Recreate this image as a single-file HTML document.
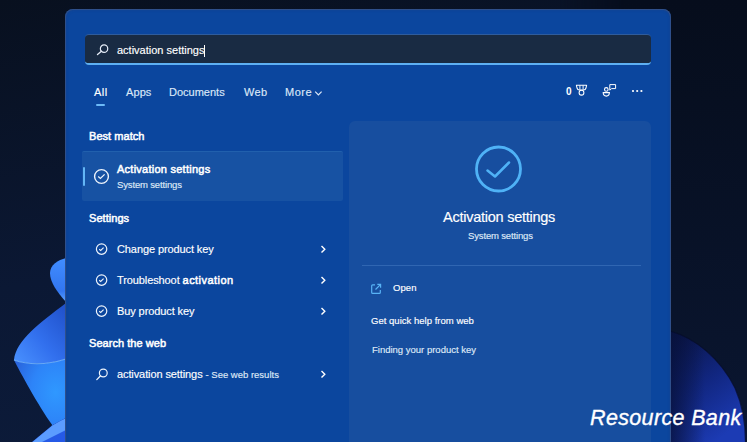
<!DOCTYPE html>
<html><head><meta charset="utf-8">
<style>
*{margin:0;padding:0;box-sizing:border-box}
html,body{width:747px;height:442px;overflow:hidden;background:#07101f;font-family:"Liberation Sans",sans-serif;color:#fff}
.abs{position:absolute}
#bg{position:absolute;left:0;top:0;width:747px;height:442px}
#panel{position:absolute;left:65px;top:9px;width:606px;height:440px;background:#0b469e;border-radius:8px;box-shadow:inset 0 0 0 1px rgba(60,85,135,.7), inset 0 0 3px 1px rgba(30,60,120,.45)}
#search{position:absolute;left:85px;top:34px;width:566px;height:31px;background:#192b43;border-radius:4px;border-top:1px solid #2f5c9c;border-bottom:2px solid #5eb0f2}
.t{position:absolute;white-space:nowrap;line-height:1}
.tab{font-size:11px;color:#dce8f8;-webkit-text-stroke:0.15px currentColor}
.hdr{font-size:11px;font-weight:normal;color:#fff;letter-spacing:0.05px;-webkit-text-stroke:0.5px #fff}
.row{font-size:11px;color:#fff;letter-spacing:-0.1px;-webkit-text-stroke:0.15px currentColor}
.row b{font-weight:normal;-webkit-text-stroke:0.5px #fff;letter-spacing:0.45px}
.sub{font-size:9.5px;color:#dfe9f7;letter-spacing:-0.15px;-webkit-text-stroke:0.15px currentColor}
#rp{position:absolute;left:349px;top:121px;width:302px;height:330px;background:#174e9f;border-radius:6px}
</style></head><body>
<svg id="bg" viewBox="0 0 747 442">
  <defs>
    <linearGradient id="bgg" x1="0" y1="0" x2="0.3" y2="1">
      <stop offset="0" stop-color="#08101f"/><stop offset="0.6" stop-color="#0b1834"/><stop offset="1" stop-color="#0c1b3a"/>
    </linearGradient>
    <linearGradient id="leaf" x1="0" y1="0" x2="0" y2="1">
      <stop offset="0" stop-color="#418dff"/><stop offset="0.75" stop-color="#3276f0"/><stop offset="1" stop-color="#5aa2ff"/>
    </linearGradient>
    <linearGradient id="cup" x1="1" y1="0" x2="0" y2="1">
      <stop offset="0" stop-color="#1f4fc8"/><stop offset="0.55" stop-color="#3270ee"/><stop offset="1" stop-color="#4a92ff"/>
    </linearGradient>
    <radialGradient id="bowl" cx="0.8" cy="0.5" r="0.85">
      <stop offset="0" stop-color="#2f98ff"/><stop offset="0.55" stop-color="#2d84f8"/><stop offset="1" stop-color="#2a66de"/>
    </radialGradient>
    <linearGradient id="pet" x1="0" y1="0" x2="1" y2="1">
      <stop offset="0" stop-color="#2a5fe0"/><stop offset="1" stop-color="#2458e8"/>
    </linearGradient>
    <linearGradient id="rb" gradientUnits="userSpaceOnUse" x1="672" y1="338" x2="738" y2="425">
      <stop offset="0" stop-color="#0a1547"/><stop offset="0.5" stop-color="#112680"/><stop offset="1" stop-color="#1c3bb4"/>
    </linearGradient>
    <linearGradient id="rbl" gradientUnits="userSpaceOnUse" x1="671" y1="0" x2="705" y2="0">
      <stop offset="0" stop-color="#07113a" stop-opacity="0.75"/><stop offset="1" stop-color="#07113a" stop-opacity="0"/>
    </linearGradient>
    <linearGradient id="rbg" x1="0" y1="0" x2="0" y2="1">
      <stop offset="0" stop-color="#060d1c"/><stop offset="1" stop-color="#0a1631"/>
    </linearGradient>
    <linearGradient id="rmask" x1="0" y1="0" x2="1" y2="0">
      <stop offset="0" stop-color="#fff" stop-opacity="0"/><stop offset="0.35" stop-color="#fff" stop-opacity="1"/>
    </linearGradient>
    <mask id="rm"><rect x="560" width="187" height="442" fill="url(#rmask)"/></mask>
  </defs>
  <rect width="747" height="442" fill="url(#bgg)"/><rect x="560" width="187" height="442" fill="url(#rbg)" mask="url(#rm)"/>
  <path d="M66 258 C58 260 50 265 50 273 C50 282 57 292 66 302 Z" fill="url(#leaf)"/>
  <path d="M66 303 C40 323 16 340 14 360 Q37 368 66 359 Z" fill="url(#cup)"/>
  <path d="M14 360 Q37 368 66 359 L66 418 L52.4 425.3 C38 405 20 372 14 360 Z" fill="url(#bowl)"/>
  <path d="M14 360 Q37 368 66 359" fill="none" stroke="#72b4ff" stroke-width="1.2" opacity="0.85"/>
  <path d="M32 442 L52.4 425.3 Q60 420.5 66 418 L66 442 Z" fill="url(#pet)"/>
  <path d="M32.5 442 L52.4 425.6 Q60 420.8 66 418.3 L66 430 L42 442 Z" fill="#5b9cff"/>
  <path d="M670 331 C695 338 720 358 735 388 C742 404 745.5 420 745.5 442 L670 442 Z" fill="url(#rb)"/><path d="M670 331 C695 338 720 358 735 388 C742 404 745.5 420 745.5 442 L670 442 Z" fill="url(#rbl)"/><path d="M670 331 C695 338 720 358 735 388 C742 404 745.5 420 745.5 442" fill="none" stroke="#050b26" stroke-width="1.2" opacity="0.7"/>
  
</svg>
<div id="panel"></div>
<div id="search"></div>
<div id="rp"></div>

<!-- search box -->
<svg class="abs" style="left:94px;top:40px" width="16" height="18" viewBox="0 0 16 18"><circle cx="10.05" cy="8.65" r="3.7" fill="none" stroke="#e6edf8" stroke-width="1.2"/><path d="M7.4 11.3 L3.5 14.6" stroke="#e6edf8" stroke-width="1.3" stroke-linecap="round"/></svg>
<div class="t" style="left:117px;top:45px;font-size:11px;color:#fff;-webkit-text-stroke:0.15px #fff">activation settings</div>
<div class="abs" style="left:204px;top:45px;width:1px;height:12px;background:#fff"></div>

<!-- tabs -->
<div class="t tab" style="left:94px;top:87px;color:#fff;letter-spacing:0.5px">All</div>
<div class="abs" style="left:96px;top:104px;width:9px;height:2px;border-radius:1px;background:#6cbaf7"></div>
<div class="t tab" style="left:126px;top:87px;letter-spacing:0.1px">Apps</div>
<div class="t tab" style="left:169px;top:87px">Documents</div>
<div class="t tab" style="left:244px;top:87px;letter-spacing:0.3px">Web</div>
<div class="t tab" style="left:285px;top:87px;letter-spacing:0.5px">More</div>
<svg class="abs" style="left:313px;top:89px" width="10" height="8" viewBox="0 0 10 8"><path d="M2.2 2.6 L5.4 5.8 L8.6 2.6" fill="none" stroke="#dce8f8" stroke-width="1.2"/></svg>

<!-- right icons -->
<div class="t" style="left:566px;top:87px;font-size:10px;font-weight:bold">0</div>
<svg class="abs" style="left:574px;top:83px" width="16" height="16" viewBox="0 0 16 16">
  <path d="M2.4 2.3 H12.6 L12 5 Q11.5 6.9 9.6 6.9 H5.4 Q3.5 6.9 3 5 Z" fill="none" stroke="#fff" stroke-width="1.05" stroke-linejoin="round"/>
  <path d="M5.9 2.3 V6.8 M9.1 2.3 V6.8" stroke="#fff" stroke-width="0.95"/>
  <circle cx="7.5" cy="9.7" r="2.4" fill="none" stroke="#fff" stroke-width="1.05"/>
</svg>
<svg class="abs" style="left:601px;top:82px" width="18" height="17" viewBox="0 0 18 17">
  <circle cx="5.3" cy="7.4" r="1.8" fill="none" stroke="#fff" stroke-width="1.1"/>
  <path d="M2.2 10.6 H8.4 Q8.4 14.1 5.3 14.1 Q2.2 14.1 2.2 10.6 Z" fill="none" stroke="#fff" stroke-width="1.1"/>
  <path d="M8.8 2.6 H14.6 V6.6 H10.6 L8.8 8.2 Z" fill="none" stroke="#fff" stroke-width="1" stroke-linejoin="round"/>
</svg>
<svg class="abs" style="left:630px;top:88px" width="14" height="6" viewBox="0 0 14 6">
  <circle cx="3" cy="3" r="1.1" fill="#fff"/><circle cx="7.2" cy="3" r="1.1" fill="#fff"/><circle cx="11.4" cy="3" r="1.1" fill="#fff"/>
</svg>

<!-- best match -->
<div class="t hdr" style="left:89px;top:131px">Best match</div>
<div class="abs" style="left:82px;top:151px;width:261px;height:50px;background:#1752a3;border-radius:2px;border-top:1px solid #2160ad"></div>
<div class="abs" style="left:82.5px;top:167px;width:2.5px;height:19px;background:#63b6f6;border-radius:2px"></div>
<svg class="abs" style="left:92px;top:167px" width="20" height="20" viewBox="0 0 20 20"><circle cx="9.5" cy="9.5" r="6.9" fill="none" stroke="#eef4fc" stroke-width="1.4"/><path d="M6.2 9.6 L8.4 11.4 L12.6 7.4" fill="none" stroke="#eef4fc" stroke-width="1.3"/></svg>
<div class="t" style="left:117px;top:164px;font-size:11px;letter-spacing:0.25px;-webkit-text-stroke:0.5px #fff">Activation settings</div>
<div class="t sub" style="left:117px;top:180px">System settings</div>

<!-- settings -->
<div class="t hdr" style="left:89px;top:213px">Settings</div>

<svg class="abs" style="left:94px;top:242px" width="16" height="16" viewBox="0 0 16 16"><circle cx="7.6" cy="7.1" r="5.2" fill="none" stroke="#eef4fc" stroke-width="1.2"/><path d="M5.2 7.3 L6.7 8.5 L9.6 5.6" fill="none" stroke="#eef4fc" stroke-width="1.1"/></svg>
<div class="t row" style="left:117px;top:244px">Change product key</div>
<svg class="abs" style="left:318px;top:243px" width="10" height="12" viewBox="0 0 10 12"><path d="M3.5 3 L6.8 6.3 L3.5 9.6" fill="none" stroke="#fff" stroke-width="1.4"/></svg>

<svg class="abs" style="left:94px;top:273px" width="16" height="16" viewBox="0 0 16 16"><circle cx="7.6" cy="7.1" r="5.2" fill="none" stroke="#eef4fc" stroke-width="1.2"/><path d="M5.2 7.3 L6.7 8.5 L9.6 5.6" fill="none" stroke="#eef4fc" stroke-width="1.1"/></svg>
<div class="t row" style="left:117px;top:275px">Troubleshoot <b>activation</b></div>
<svg class="abs" style="left:318px;top:274px" width="10" height="12" viewBox="0 0 10 12"><path d="M3.5 3 L6.8 6.3 L3.5 9.6" fill="none" stroke="#fff" stroke-width="1.4"/></svg>

<svg class="abs" style="left:94px;top:304px" width="16" height="16" viewBox="0 0 16 16"><circle cx="7.6" cy="7.1" r="5.2" fill="none" stroke="#eef4fc" stroke-width="1.2"/><path d="M5.2 7.3 L6.7 8.5 L9.6 5.6" fill="none" stroke="#eef4fc" stroke-width="1.1"/></svg>
<div class="t row" style="left:117px;top:306px">Buy product key</div>
<svg class="abs" style="left:318px;top:305px" width="10" height="12" viewBox="0 0 10 12"><path d="M3.5 3 L6.8 6.3 L3.5 9.6" fill="none" stroke="#fff" stroke-width="1.4"/></svg>

<div class="t hdr" style="left:89px;top:338px">Search the web</div>
<svg class="abs" style="left:94px;top:366px" width="16" height="16" viewBox="0 0 16 16"><circle cx="9.3" cy="7" r="3.9" fill="none" stroke="#eef4fc" stroke-width="1.2"/><path d="M6.6 9.8 L2.8 13.6" stroke="#eef4fc" stroke-width="1.3" stroke-linecap="round"/></svg>
<div class="t row" style="left:117px;top:369px">activation settings <span class="sub" style="letter-spacing:0">- See web results</span></div>
<svg class="abs" style="left:318px;top:368px" width="10" height="12" viewBox="0 0 10 12"><path d="M3.5 3 L6.8 6.3 L3.5 9.6" fill="none" stroke="#fff" stroke-width="1.4"/></svg>

<!-- right panel content -->
<svg class="abs" style="left:470px;top:140px" width="58" height="58" viewBox="0 0 58 58"><circle cx="28.5" cy="29" r="22" fill="none" stroke="#4fb2f6" stroke-width="2.8"/><path d="M17.5 30.5 L25 36.5 L39 22.5" fill="none" stroke="#4fb2f6" stroke-width="2.5" stroke-linecap="round" stroke-linejoin="round"/></svg>
<div class="t" style="left:443px;top:210px;font-size:14.5px;letter-spacing:-0.25px;-webkit-text-stroke:0.15px #fff">Activation settings</div>
<div class="t sub" style="left:468px;top:231px">System settings</div>
<div class="abs" style="left:362px;top:265px;width:279px;height:1px;background:#3066b2"></div>
<svg class="abs" style="left:369px;top:282px" width="14" height="14" viewBox="0 0 14 14"><path d="M6 2.8 H3.7 Q2.7 2.8 2.7 3.8 V10.4 Q2.7 11.3 3.7 11.3 H10.3 Q11.3 11.3 11.3 10.4 V8" fill="none" stroke="#58b3f6" stroke-width="1.2"/><path d="M6.5 7.5 L11.4 2.6 M8.3 2.4 H11.6 V5.7" fill="none" stroke="#58b3f6" stroke-width="1.2"/></svg>
<div class="t sub" style="left:393px;top:283px;color:#fff;letter-spacing:0.1px">Open</div>
<div class="t sub" style="left:371px;top:316px;color:#fff;letter-spacing:0.02px">Get quick help from web</div>
<div class="t sub" style="left:372px;top:345px;letter-spacing:0">Finding your product key</div>

<div class="t" style="left:590px;top:408px;font-size:21.5px;font-style:italic;letter-spacing:0.35px;color:#fff;-webkit-text-stroke:0.35px #fff">Resource Bank</div>
</body></html>
